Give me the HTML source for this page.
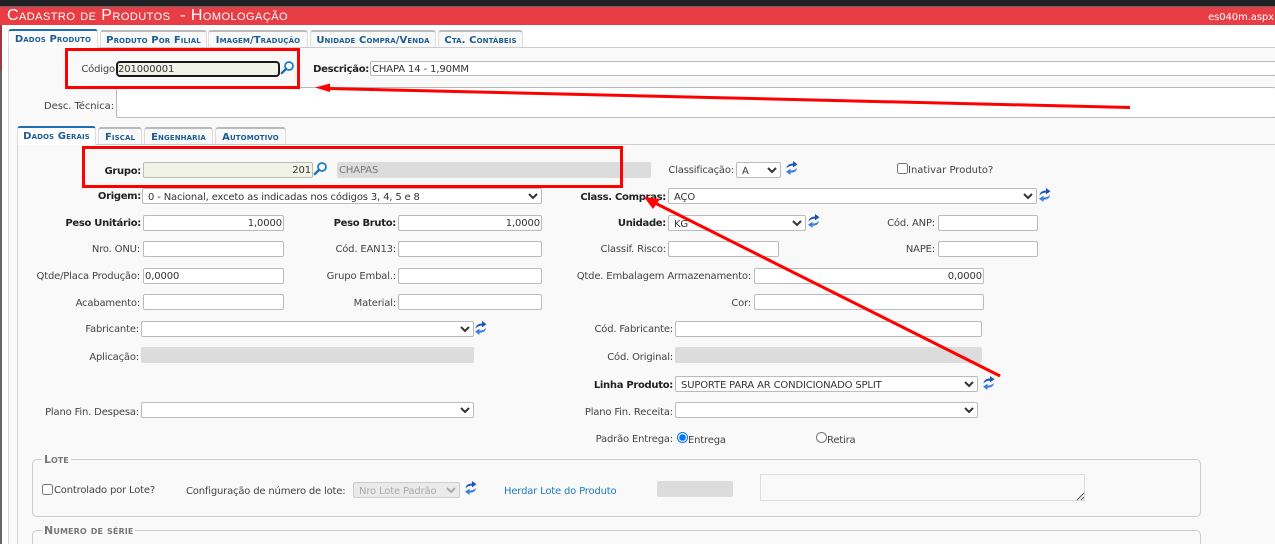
<!DOCTYPE html>
<html lang="pt-BR"><head><meta charset="utf-8"><title>Cadastro de Produtos</title>
<style>
*{box-sizing:border-box}
html,body{margin:0;padding:0;width:1275px;height:544px;overflow:hidden}
body{background:#fff;font-family:"DejaVu Sans",Verdana,sans-serif;font-size:10px;color:#333}
#w{position:relative;width:1275px;height:544px;overflow:hidden;background:#fff}
.a{position:absolute}
.l{position:absolute;white-space:nowrap;line-height:12px;color:#444;letter-spacing:-.18px;margin-top:1px}
.b{font-weight:bold;color:#222;letter-spacing:-.3px}
.i{position:absolute;border:1px solid #bbb;border-radius:2px;background:#fff;height:16px;font-size:10px;line-height:13px;padding:1px 1px 0;color:#333;white-space:nowrap;overflow:hidden;letter-spacing:-.12px}
.r{text-align:right}
.g{background:#dcdcdc;border-color:#dcdcdc;color:#777}
select{position:absolute;border:1px solid #bbb;border-radius:2px;background:#fff;height:16px;font:10px "DejaVu Sans",Verdana,sans-serif;color:#333;margin:0;padding:2px 0 0 1px;outline:0;letter-spacing:-.16px}
input[type=checkbox],input[type=radio]{position:absolute;margin:0;width:11px;height:11px}
.t{position:absolute;height:17px;border:1px solid #ddd;border-bottom:0;border-top:2px solid #bbb;background:#f9f9f9;border-radius:3px 3px 0 0;color:#1b5c94;font-size:10px;font-variant:small-caps;font-weight:bold;letter-spacing:.1px;text-align:center;line-height:18px;white-space:nowrap}
.t.on{background:#fff;border-top-color:#1b6fb0;z-index:2;height:19px}
.f{position:absolute;border:1px solid #ccc;border-radius:5px}
.lg{position:absolute;background:#f9f9f9;padding:0 2px;color:#777;font-weight:bold;font-variant:small-caps;font-size:11px;line-height:12px;white-space:nowrap}
.h{position:absolute;border:3px solid #f00;z-index:5}
svg.ic{position:absolute;overflow:visible}
</style></head><body><div id="w">
<svg width="0" height="0" style="position:absolute"><defs>
<g id="m"><circle cx="9" cy="5" r="4" fill="none" stroke="#1d7fc4" stroke-width="1.8"/><path d="M6 8L1.800 12" stroke="#1d6fb0" stroke-width="2.400" stroke-linecap="round"/></g>
<g id="s"><path d="M0.500 7.500C1 3.500 4 2.600 7 2.600V0L11.500 3.200L7 6.400V4.600C4.500 4.600 2.500 5.300 0.500 7.500Z" fill="#1a52b8"/><path d="M11 7C10.500 11 7.500 11.600 4.500 11.600V14L0 10.800L4.500 7.600V9.500C7 9.500 9 9 11 7Z" fill="#3a7ee0"/></g>
</defs></svg>

<div class="a" style="left:0;top:0;width:1275px;height:6px;background:#202124"></div>
<div class="a" style="left:0;top:6px;width:1275px;height:1px;background:#666"></div>
<div class="a" style="left:0;top:7px;width:1275px;height:18px;background:#e93d46"></div>
<div class="a" style="left:7px;top:7px;color:#fff;font:16px/18px 'Liberation Sans',sans-serif;font-variant:small-caps;white-space:pre;letter-spacing:.45px">Cadastro de Produtos&nbsp; - Homologação</div>
<div class="a" style="right:1px;top:11px;color:#fff;font-size:10px;line-height:13px;letter-spacing:-.1px">es040m.aspx</div>

<div class="a" style="left:0;top:25px;width:2px;height:45px;background:#9a3a40"></div>
<div class="a" style="left:0;top:70px;width:2px;height:474px;background:#666"></div>
<div class="a" style="left:8px;top:47px;width:1267px;height:497px;background:#f9f9f9;border-left:1px solid #d4d4d4;border-top:1px solid #ccc"></div>

<div class="t on" style="left:8px;top:29px;width:90px">Dados Produto</div>
<div class="t" style="left:100px;top:30px;width:107px">Produto Por Filial</div>
<div class="t" style="left:208px;top:30px;width:100px">Imagem/Tradução</div>
<div class="t" style="left:310px;top:30px;width:126px">Unidade Compra/Venda</div>
<div class="t" style="left:438px;top:30px;width:85px">Cta. Contábeis</div>

<div class="l" style="right:1160px;top:63px">Código</div>
<div class="i" style="left:116px;top:61px;width:164px;height:16px;border:2px solid #1a1a1a;border-radius:4px;background:#f1f3e8;line-height:12px;padding:1px 0 0">201000001</div>
<svg class="ic" style="left:280px;top:61px" width="14" height="14"><use href="#m"/></svg>
<div class="l b" style="right:906px;top:63px">Descrição:</div>
<div class="i" style="left:370px;top:61px;width:906px;height:15px;line-height:13px">CHAPA 14 - 1,90MM</div>
<div class="l" style="right:1161px;top:100px;letter-spacing:-.08px">Desc. Técnica:</div>
<div class="i" style="left:116px;top:87px;width:1160px;height:31px"></div>

<div class="a" style="left:17px;top:144px;width:1258px;height:400px;border-left:1px solid #d4d4d4;border-top:1px solid #ccc"></div>
<div class="t on" style="left:17px;top:126px;width:79px">Dados Gerais</div>
<div class="t" style="left:98px;top:127px;width:44px">Fiscal</div>
<div class="t" style="left:144px;top:127px;width:69px">Engenharia</div>
<div class="t" style="left:215px;top:127px;width:71px">Automotivo</div>

<div class="l b" style="right:1134px;top:165px">Grupo:</div>
<div class="i r" style="left:143px;top:162px;width:170px;background:#f1f3e6">201</div>
<svg class="ic" style="left:313px;top:162px" width="14" height="14"><use href="#m"/></svg>
<div class="i g" style="left:337px;top:162px;width:314px">CHAPAS</div>
<div class="l" style="right:541px;top:164px">Classificação:</div>
<select style="left:736px;top:162px;width:45px"><option>A</option></select>
<svg class="ic" style="left:786px;top:161px" width="12" height="14"><use href="#s"/></svg>
<input type="checkbox" style="left:897px;top:163px">
<div class="l" style="left:908px;top:164px;letter-spacing:0">Inativar Produto?</div>

<div class="l b" style="right:1134px;top:190px">Origem:</div>
<select style="left:142px;top:188px;width:400px"><option>0 - Nacional, exceto as indicadas nos códigos 3, 4, 5 e 8</option></select>
<div class="l b" style="right:609px;top:191px">Class. Compras:</div>
<select style="left:668px;top:188px;width:369px"><option>AÇO</option></select>
<svg class="ic" style="left:1039px;top:188px" width="12" height="14"><use href="#s"/></svg>

<div class="l b" style="right:1134px;top:217px">Peso Unitário:</div>
<div class="i r" style="left:143px;top:215px;width:141px">1,0000</div>
<div class="l b" style="right:879px;top:217px">Peso Bruto:</div>
<div class="i r" style="left:398px;top:215px;width:144px">1,0000</div>
<div class="l b" style="right:609px;top:217px">Unidade:</div>
<select style="left:668px;top:215px;width:138px"><option>KG</option></select>
<svg class="ic" style="left:808px;top:214px" width="12" height="14"><use href="#s"/></svg>
<div class="l" style="right:340px;top:217px">Cód. ANP:</div>
<div class="i" style="left:938px;top:215px;width:100px"></div>

<div class="l" style="right:1135px;top:243px">Nro. ONU:</div>
<div class="i" style="left:143px;top:241px;width:141px"></div>
<div class="l" style="right:879px;top:243px">Cód. EAN13:</div>
<div class="i" style="left:398px;top:241px;width:144px"></div>
<div class="l" style="right:609px;top:243px">Classif. Risco:</div>
<div class="i" style="left:668px;top:241px;width:111px"></div>
<div class="l" style="right:340px;top:243px">NAPE:</div>
<div class="i" style="left:938px;top:241px;width:100px"></div>

<div class="l" style="right:1135px;top:270px">Qtde/Placa Produção:</div>
<div class="i" style="left:143px;top:268px;width:141px">0,0000</div>
<div class="l" style="right:879px;top:270px">Grupo Embal.:</div>
<div class="i" style="left:398px;top:268px;width:144px"></div>
<div class="l" style="right:524px;top:270px">Qtde. Embalagem Armazenamento:</div>
<div class="i r" style="left:754px;top:268px;width:230px">0,0000</div>

<div class="l" style="right:1135px;top:297px">Acabamento:</div>
<div class="i" style="left:143px;top:294px;width:141px"></div>
<div class="l" style="right:879px;top:297px">Material:</div>
<div class="i" style="left:398px;top:294px;width:144px"></div>
<div class="l" style="right:524px;top:297px">Cor:</div>
<div class="i" style="left:754px;top:294px;width:230px"></div>

<div class="l" style="right:1136px;top:323px">Fabricante:</div>
<select style="left:141px;top:321px;width:333px"><option></option></select>
<svg class="ic" style="left:475px;top:321px" width="12" height="14"><use href="#s"/></svg>
<div class="l" style="right:602px;top:323px">Cód. Fabricante:</div>
<div class="i" style="left:675px;top:321px;width:307px"></div>

<div class="l" style="right:1136px;top:351px">Aplicação:</div>
<div class="i g" style="left:141px;top:347px;width:333px"></div>
<div class="l" style="right:602px;top:351px">Cód. Original:</div>
<div class="i g" style="left:675px;top:347px;width:307px"></div>

<div class="l b" style="right:602px;top:379px">Linha Produto:</div>
<select style="left:675px;top:376px;width:303px"><option>SUPORTE PARA AR CONDICIONADO SPLIT</option></select>
<svg class="ic" style="left:983px;top:376px" width="12" height="14"><use href="#s"/></svg>

<div class="l" style="right:1136px;top:406px">Plano Fin. Despesa:</div>
<select style="left:141px;top:402px;width:333px"><option></option></select>
<div class="l" style="right:602px;top:406px">Plano Fin. Receita:</div>
<select style="left:675px;top:402px;width:303px"><option></option></select>

<div class="l" style="right:602px;top:433px">Padrão Entrega:</div>
<input type="radio" checked style="left:677px;top:432px">
<div class="l" style="left:688px;top:434px">Entrega</div>
<input type="radio" style="left:816px;top:432px">
<div class="l" style="left:827px;top:434px">Retira</div>

<div class="f" style="left:32px;top:459px;width:1169px;height:58px"></div>
<div class="lg" style="left:42px;top:454px">Lote</div>
<input type="checkbox" style="left:42px;top:484px">
<div class="l" style="left:54px;top:484px">Controlado por Lote?</div>
<div class="l" style="left:186px;top:485px">Configuração de número de lote:</div>
<select disabled style="left:353px;top:482px;width:107px;background:#e4e4e4;color:#888"><option>Nro Lote Padrão</option></select>
<svg class="ic" style="left:465px;top:481px" width="12" height="14"><use href="#s"/></svg>
<div class="l" style="left:504px;top:485px;color:#1a7cc0">Herdar Lote do Produto</div>
<div class="i g" style="left:657px;top:481px;width:76px"></div>
<div class="a" style="left:760px;top:474px;width:325px;height:27px;border:1px solid #ddd;background:#f9f9f9"></div>
<svg class="ic" style="left:1077px;top:493px" width="7" height="7"><path d="M0 7L7 0M4 7L7 4" stroke="#555" stroke-width="1"/></svg>

<div class="f" style="left:32px;top:530px;width:1169px;height:40px"></div>
<div class="lg" style="left:42px;top:525px;letter-spacing:.12px">Numero de série</div>

<div class="h" style="left:65px;top:48px;width:235px;height:41px"></div>
<div class="h" style="left:82px;top:146px;width:541px;height:42px"></div>
<svg class="a" style="left:0;top:0;z-index:6" width="1275" height="544">
<line x1="1130" y1="107.500" x2="328" y2="88.500" stroke="#f00" stroke-width="3"/>
<polygon points="315,87.500 330,83.500 330,92" fill="#f00"/>
<line x1="1000" y1="376" x2="655" y2="203" stroke="#f00" stroke-width="3"/>
<polygon points="644,197 660,199 653,209" fill="#f00"/>
</svg>
</div></body></html>
